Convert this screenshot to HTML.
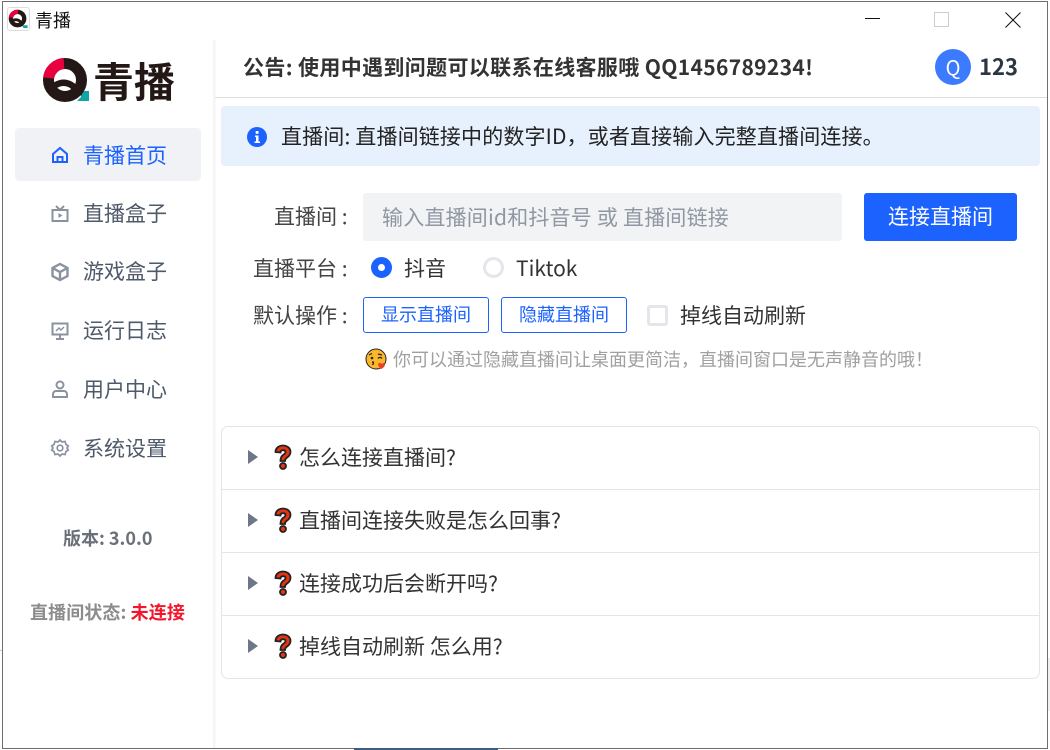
<!DOCTYPE html>
<html lang="zh"><head><meta charset="utf-8"><style>
*{box-sizing:border-box;margin:0;padding:0}
html,body{width:1050px;height:750px;overflow:hidden;background:#fff}
body{position:relative;font-family:"Liberation Sans","Noto Sans CJK SC",sans-serif;color:#333}
.a{position:absolute;white-space:nowrap}
.t{position:absolute;white-space:nowrap;font-family:"Noto Sans CJK SC","Liberation Sans",sans-serif;line-height:28px;height:28px}
.nav{font-size:21px;color:#4e5969;left:83px}
svg{position:absolute;overflow:visible}
.i{fill:none;stroke:#8a919f;stroke-width:2}
.row{position:absolute;left:222px;width:817px;height:63px;border-bottom:1px solid #e4e5ea}
.tri{position:absolute;left:26px;top:23px;width:0;height:0;border-left:10px solid #6d7788;border-top:7px solid transparent;border-bottom:7px solid transparent}
.q{left:50px;top:17px}
.f{left:77px;top:16px;font-size:21px;color:#333}
</style></head><body>
<div class="a" style="left:2px;top:1px;width:1046px;height:748px;border:1px solid #6e6e6e"></div>
<div class="a" style="left:354px;top:748px;width:144px;height:2px;background:#3a5f82"></div>
<div class="a" style="left:0;top:650px;width:2px;height:1px;background:#ccc"></div>
<div class="a" style="left:1048px;top:658px;width:2px;height:53px;background:#f0f0f0"></div>

<div class="a" style="left:7px;top:7px;width:23px;height:24px;border:1px solid #ddd;border-radius:3px"></div>
<svg style="left:8px;top:9px" width="21" height="21" viewBox="0 0 44 44">
<path d="M29 34h12v6H33z" fill="#12a5a8"/>
<circle cx="20" cy="20" r="14" fill="none" stroke="#231815" stroke-width="9"/>
<path d="M6 18A14 14 0 0 1 21 6" fill="none" stroke="#e8003f" stroke-width="9"/>
<path d="M9 25c7-5 16-3 21 8" fill="none" stroke="#231815" stroke-width="6"/></svg>
<div class="t" style="left:35px;top:6px;font-size:18px;color:#111">青播</div>

<svg style="left:865px;top:18px" width="16" height="2"><rect width="15" height="1" fill="#111"/></svg>
<div class="a" style="left:934px;top:12px;width:15px;height:15px;border:1px solid #ccc"></div>
<svg style="left:1005px;top:12px" width="16" height="16" viewBox="0 0 16 16"><path d="M.5.5l15 15M15.500.5l-15 15" stroke="#111" fill="none" stroke-width="1"/></svg>

<div class="a" style="left:213px;top:40px;width:3px;height:708px;background:linear-gradient(90deg,#f3f3f4,#fafafa)"></div>
<div class="a" style="left:215px;top:97px;width:832px;height:1px;background:#dcdcdc"></div>

<svg style="left:42px;top:57px" width="50" height="46" viewBox="0 0 50 46">
<path d="M39 34h8v10H35l4-4z" fill="#12a5a8"/>
<circle cx="23" cy="23" r="16.500" fill="none" stroke="#231815" stroke-width="11"/>
<path d="M6.600 21A16.500 16.500 0 0 1 22 6.500" fill="none" stroke="#e8003f" stroke-width="11"/>
<path d="M11 30c8-7 21-6 26 9" fill="none" stroke="#231815" stroke-width="6.500"/></svg>
<div class="t" style="left:93px;top:56px;font-size:41px;line-height:46px;height:46px;font-weight:700;color:#231815">青播</div>

<div class="a" style="left:15px;top:128px;width:186px;height:53px;background:#f1f2f5;border-radius:4px"></div>
<svg style="left:51px;top:146px" width="18" height="18" viewBox="0 0 18 18"><path d="M2 8L9 2l7 6v8H2zM6.500 16v-5h5v5" fill="none" stroke="#1c62ff" stroke-width="2"/></svg>
<div class="t nav" style="top:141px;color:#1c62ff">青播首页</div>
<svg style="left:51px;top:205px" width="18" height="18" viewBox="0 0 18 18"><path d="M5 1l4 4 4-4" class="i"/><rect x="1.500" y="5" width="15" height="11" class="i"/><path d="M7.500 8v5l4-2.500z" fill="#8a919f"/></svg>
<div class="t nav" style="top:199px">直播盒子</div>
<svg style="left:51px;top:263px" width="18" height="18" viewBox="0 0 18 18"><path d="M9 1l7.500 4v8L9 17l-7.500-4V5zM1.500 5L9 9l7.500-4M9 9v8" fill="none" stroke="#8a919f" stroke-width="2.400"/></svg>
<div class="t nav" style="top:257px">游戏盒子</div>
<svg style="left:51px;top:322px" width="18" height="18" viewBox="0 0 18 18"><rect x="1.500" y="1.500" width="15" height="11" class="i"/><path d="M9 13v4M5 17h8" class="i"/><path d="M5 9l3-3 2 2 3-3" fill="none" stroke="#8a919f" stroke-width="1.400"/></svg>
<div class="t nav" style="top:316px">运行日志</div>
<svg style="left:51px;top:380px" width="18" height="18" viewBox="0 0 18 18"><circle cx="9" cy="5" r="3.500" class="i"/><path d="M2 17v-3c0-1.500 1.500-3 3-3h8c1.500 0 3 1.500 3 3v3z" class="i"/></svg>
<div class="t nav" style="top:375px">用户中心</div>
<svg style="left:51px;top:439px" width="18" height="18" viewBox="0 0 18 18"><path d="M9 1l2 2 3-.5 1 3 2.300 1.500L16 9l1.300 2-2.300 1.500-1 3-3-.5-2 2-2-2-3 .5-1-3L.7 11 2 9 .7 7 3 5.500l1-3 3 .5z" class="i" style="stroke-width:1.700"/><circle cx="9" cy="9" r="2.800" class="i" style="stroke-width:1.700"/></svg>
<div class="t nav" style="top:434px">系统设置</div>

<div class="t" style="left:63px;top:524px;font-size:18px;font-weight:700;color:#6b7078">版本: 3.0.0</div>
<div class="t" style="left:30px;top:598px;font-size:18px;font-weight:700;color:#8c8c8c;letter-spacing:.1px">直播间状态: <span style="color:#f5142a">未连接</span></div>

<div class="t" style="left:243px;top:53px;font-size:21px;font-weight:700;color:#333;letter-spacing:.35px">公告: 使用中遇到问题可以联系在线客服哦 QQ1456789234!</div>
<div class="a" style="left:935px;top:49px;width:36px;height:36px;border-radius:50%;background:#3c7bff;color:#fff;text-align:center;font-size:20px;line-height:36px;font-family:'Noto Sans CJK SC',sans-serif">Q</div>
<div class="t" style="left:979px;top:52px;font-size:22px;font-weight:700;color:#2b3544">123</div>

<div class="a" style="left:221px;top:106px;width:819px;height:60px;background:#e7f1fe;border-radius:4px"></div>
<svg style="left:247px;top:127px" width="20" height="20" viewBox="0 0 20 20"><circle cx="10" cy="10" r="10" fill="#1c62ff"/><rect x="8.700" y="4" width="2.800" height="2.800" fill="#fff"/><path d="M8 8.500h3.500v6H13V16H7.500v-1.500h1.500V10H8z" fill="#fff"/></svg>
<div class="t" style="left:281px;top:122px;font-size:21px;color:#222;letter-spacing:.15px">直播间: 直播间链接中的数字ID，或者直接输入完整直播间连接。</div>

<div class="t" style="left:274px;top:202px;font-size:21px;color:#444">直播间 :</div>
<div class="a" style="left:363px;top:193px;width:479px;height:48px;background:#f2f3f5;border-radius:3px"></div>
<div class="t" style="left:382px;top:203px;font-size:21px;color:#9097a3;letter-spacing:.2px">输入直播间id和抖音号 或 直播间链接</div>
<div class="a" style="left:864px;top:193px;width:153px;height:48px;background:#1c62ff;border-radius:3px;color:#fff;text-align:center;font-size:21px;line-height:47px;font-family:'Noto Sans CJK SC',sans-serif">连接直播间</div>

<div class="t" style="left:253px;top:254px;font-size:21px;color:#444">直播平台 :</div>
<div class="a" style="left:371px;top:257px;width:21px;height:21px;border-radius:50%;border:7px solid #1c62ff;background:#fff"></div>
<div class="t" style="left:404px;top:254px;font-size:21px;color:#333">抖音</div>
<div class="a" style="left:483px;top:257px;width:21px;height:21px;border-radius:50%;border:3px solid #e5e6eb;background:#fff"></div>
<div class="t" style="left:516px;top:254px;font-size:21px;color:#333">Tiktok</div>

<div class="t" style="left:253px;top:301px;font-size:21px;color:#444">默认操作 :</div>
<div class="a" style="left:363px;top:297px;width:126px;height:36px;border:1px solid #1c62ff;border-radius:3px;color:#1c62ff;text-align:center;font-size:18px;line-height:33px;font-family:'Noto Sans CJK SC',sans-serif">显示直播间</div>
<div class="a" style="left:501px;top:297px;width:126px;height:36px;border:1px solid #1c62ff;border-radius:3px;color:#1c62ff;text-align:center;font-size:18px;line-height:33px;font-family:'Noto Sans CJK SC',sans-serif">隐藏直播间</div>
<div class="a" style="left:647px;top:305px;width:21px;height:21px;border:3px solid #e5e6eb;border-radius:3px;background:#fff"></div>
<div class="t" style="left:680px;top:301px;font-size:21px;color:#333">掉线自动刷新</div>

<svg style="left:365px;top:348px" width="22" height="22" viewBox="0 0 22 22"><circle cx="11" cy="11" r="10" fill="#fbb62c" stroke="#222" stroke-width="1"/><path d="M4 7l3-1.500M13 6l4 1" stroke="#222" stroke-width="1.200"/><circle cx="7" cy="10" r="1.300" fill="#222"/><path d="M13 10.500c1-1.500 3-1.500 4 0" stroke="#222" fill="none" stroke-width="1.300"/><path d="M7 14c2-.5 2 .5 1 1 1 .5 1 1.500-1 1.500" stroke="#222" fill="none"/><path d="M13 16c1-2 3-1 3.500 0 .5-1 3-1.500 3.500.5 0 2-2 3.500-3.500 4.500-1.500-1-3.500-3-3.500-5z" fill="#e8402a"/></svg>
<div class="t" style="left:393px;top:345px;font-size:18px;color:#a0a0a0">你可以通过隐藏直播间让桌面更简洁，直播间窗口是无声静音的哦！</div>

<div class="a" style="left:221px;top:426px;width:819px;height:253px;border:1px solid #e4e5ea;border-radius:7px"></div>
<div class="row" style="top:427px"><i class="tri"></i><svg class="q" width="22" height="26" viewBox="0 0 22 26"><path d="M3.500 8c0-4 3.500-6.500 7.500-6.500s7.500 2.500 7.500 6.500c0 3-2 4.500-4 6-1 .7-1.500 1.500-1.500 3H8.500c0-3 .5-4.500 2.500-6 1.500-1 2.500-1.700 2.500-3 0-1.200-1-1.800-2.500-1.800s-2.500 .8-2.500 2.300z" fill="#e63312" stroke="#222" stroke-width="1.800"/><circle cx="11" cy="22" r="3" fill="#e63312" stroke="#222" stroke-width="1.800"/></svg><div class="t f">怎么连接直播间?</div></div>
<div class="row" style="top:490px"><i class="tri"></i><svg class="q" width="22" height="26" viewBox="0 0 22 26"><path d="M3.500 8c0-4 3.500-6.500 7.500-6.500s7.500 2.500 7.500 6.500c0 3-2 4.500-4 6-1 .7-1.500 1.500-1.500 3H8.500c0-3 .5-4.500 2.500-6 1.500-1 2.500-1.700 2.500-3 0-1.200-1-1.800-2.500-1.800s-2.500 .8-2.500 2.300z" fill="#e63312" stroke="#222" stroke-width="1.800"/><circle cx="11" cy="22" r="3" fill="#e63312" stroke="#222" stroke-width="1.800"/></svg><div class="t f">直播间连接失败是怎么回事?</div></div>
<div class="row" style="top:553px"><i class="tri"></i><svg class="q" width="22" height="26" viewBox="0 0 22 26"><path d="M3.500 8c0-4 3.500-6.500 7.500-6.500s7.500 2.500 7.500 6.500c0 3-2 4.500-4 6-1 .7-1.500 1.500-1.500 3H8.500c0-3 .5-4.500 2.500-6 1.500-1 2.500-1.700 2.500-3 0-1.200-1-1.800-2.500-1.800s-2.500 .8-2.500 2.300z" fill="#e63312" stroke="#222" stroke-width="1.800"/><circle cx="11" cy="22" r="3" fill="#e63312" stroke="#222" stroke-width="1.800"/></svg><div class="t f">连接成功后会断开吗?</div></div>
<div class="row" style="top:616px;border:0"><i class="tri"></i><svg class="q" width="22" height="26" viewBox="0 0 22 26"><path d="M3.500 8c0-4 3.500-6.500 7.500-6.500s7.500 2.500 7.500 6.500c0 3-2 4.500-4 6-1 .7-1.500 1.500-1.500 3H8.500c0-3 .5-4.500 2.500-6 1.500-1 2.500-1.700 2.500-3 0-1.200-1-1.800-2.500-1.800s-2.500 .8-2.500 2.300z" fill="#e63312" stroke="#222" stroke-width="1.800"/><circle cx="11" cy="22" r="3" fill="#e63312" stroke="#222" stroke-width="1.800"/></svg><div class="t f">掉线自动刷新 怎么用?</div></div>
</body></html>
